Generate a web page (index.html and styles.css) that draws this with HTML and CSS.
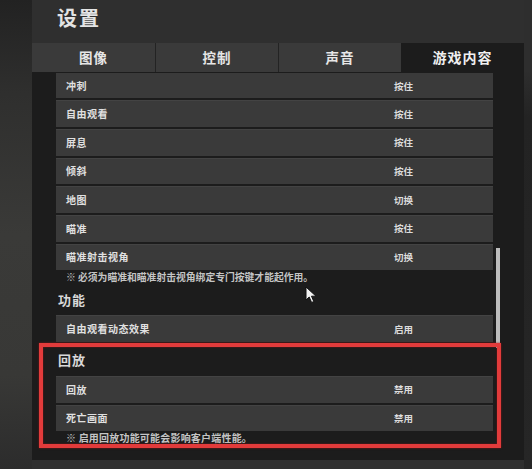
FILE: index.html
```html
<!DOCTYPE html>
<html lang="zh-CN">
<head>
<meta charset="utf-8">
<title>设置</title>
<link rel="stylesheet" href="styles.css">
</head>
<body>
<div class="screen">
  <div class="side-left"></div>
  <div class="panel">
    <h1 class="title">设置</h1>
    <nav class="tabs">
      <div class="tab">图像</div>
      <div class="tab sep">控制</div>
      <div class="tab sep">声音</div>
      <div class="tab active">游戏内容</div>
    </nav>
    <div class="content">
      <div class="list">
        <div class="row first"><span class="label">冲刺</span><span class="value">按住</span></div>
        <div class="row"><span class="label">自由观看</span><span class="value">按住</span></div>
        <div class="row"><span class="label">屏息</span><span class="value">按住</span></div>
        <div class="row"><span class="label">倾斜</span><span class="value">按住</span></div>
        <div class="row"><span class="label">地图</span><span class="value">切换</span></div>
        <div class="row"><span class="label">瞄准</span><span class="value">按住</span></div>
        <div class="row"><span class="label">瞄准射击视角</span><span class="value">切换</span></div>
        <p class="note note1">※ 必须为瞄准和瞄准射击视角绑定专门按键才能起作用。</p>
        <h2 class="section">功能</h2>
        <div class="row"><span class="label">自由观看动态效果</span><span class="value">启用</span></div>
        <h2 class="section replay">回放</h2>
        <div class="row"><span class="label">回放</span><span class="value">禁用</span></div>
        <div class="row"><span class="label">死亡画面</span><span class="value">禁用</span></div>
        <p class="note note2">※ 启用回放功能可能会影响客户端性能。</p>
      </div>
      <div class="scroll"><div class="thumb"></div></div>
    </div>
  </div>
  <div class="side-right"></div>
  <div class="highlight"></div>
  <svg class="cursor" width="13" height="18" viewBox="0 0 13 18">
    <path d="M1 1 L1 14 L4.2 11 L6.6 16.5 L8.8 15.5 L6.5 10.2 L11 10.2 Z" fill="#f2f2f2" stroke="#111" stroke-width="1"/>
  </svg>
</div>
</body>
</html>
```

FILE: styles.css
```css
html, body {
  margin: 0;
  padding: 0;
  background: #2d2d2d;
}

.screen {
  position: relative;
  width: 532px;
  height: 469px;
  overflow: hidden;
  display: flex;
  font-family: "Noto Sans CJK SC", "Noto Sans", sans-serif;
  color: #e2e2e2;
}

.side-left {
  width: 32px;
  flex: none;
  background: linear-gradient(180deg, #222 0%, #2f2f2e 20%, #3a3a38 50%, #383836 80%, #2c2c2c 100%);
}

.panel {
  width: 492px;
  flex: none;
  display: flex;
  flex-direction: column;
  background: #2f2f2f;
  padding-bottom: 9px;
}

.side-right {
  flex: 1;
  background: linear-gradient(180deg, #2e2e2e 0%, #2e2e2e 15%, #232323 25%, #262626 100%);
}

.title {
  margin: 0;
  height: 43px;
  line-height: 36px;
  padding-left: 25px;
  font-size: 20px;
  font-weight: 700;
  letter-spacing: 2px;
  color: #e4e4e4;
}

.tabs {
  display: grid;
  grid-template-columns: repeat(4, 1fr);
  height: 29px;
}

.tab {
  background: #3a3a3a;
  text-align: center;
  line-height: 28px;
  font-size: 13.5px;
  font-weight: 700;
  letter-spacing: 1px;
  color: #e6e6e6;
}

.tab.sep {
  border-left: 1px solid #232323;
}

.tab.active {
  background: #1c1c1c;
  color: #f0f0f0;
  font-size: 14px;
}

.content {
  flex: 1;
  display: flex;
  background: #1c1c1c;
  padding-left: 24px;
  overflow: hidden;
}

.list {
  width: 437px;
  flex: none;
  padding-top: 1px;
}

.row {
  height: 26.67px;
  margin-bottom: 2px;
  background: #3a3a3a;
  box-shadow: inset 0 1px 0 #434343;
  display: grid;
  grid-template-columns: 328px 1fr;
  align-items: center;
  padding-left: 10px;
  box-sizing: border-box;
}

.row.first {
  height: 25.33px;
  box-shadow: none;
}

.label {
  font-size: 10px;
  font-weight: 700;
  letter-spacing: 0.5px;
  color: #e0e0e0;
}

.value {
  font-size: 9.5px;
  font-weight: 700;
  color: #dcdcdc;
}

.note {
  margin: -2px 0 0 0;
  height: 17px;
  line-height: 15px;
  padding-left: 10px;
  font-size: 10px;
  font-weight: 700;
  color: #c4c4c4;
}

.note1 {
  font-size: 9.8px;
  letter-spacing: 0;
}

.note2 {
  letter-spacing: 0.2px;
  line-height: 14px;
}

.section {
  margin: -2px 0 0 0;
  height: 30px;
  line-height: 30px;
  padding-left: 2px;
  font-size: 13px;
  font-weight: 700;
  letter-spacing: 1px;
  color: #d8d8d8;
}

.section.replay {
  margin-top: 0;
  height: 32px;
  line-height: 32px;
}

.scroll {
  margin-left: 3px;
  width: 4px;
  flex: none;
}

.thumb {
  margin-top: 176px;
  height: 100px;
  background: #bdbdbd;
}

.highlight {
  position: absolute;
  left: 39px;
  top: 343px;
  width: 462px;
  height: 105px;
  box-sizing: border-box;
  border: 4px solid #e23b3b;
  box-shadow: 0 0 2px rgba(150, 20, 20, 0.8), inset 0 0 2px rgba(150, 20, 20, 0.8);
}

.cursor {
  position: absolute;
  left: 305px;
  top: 286px;
}
```
